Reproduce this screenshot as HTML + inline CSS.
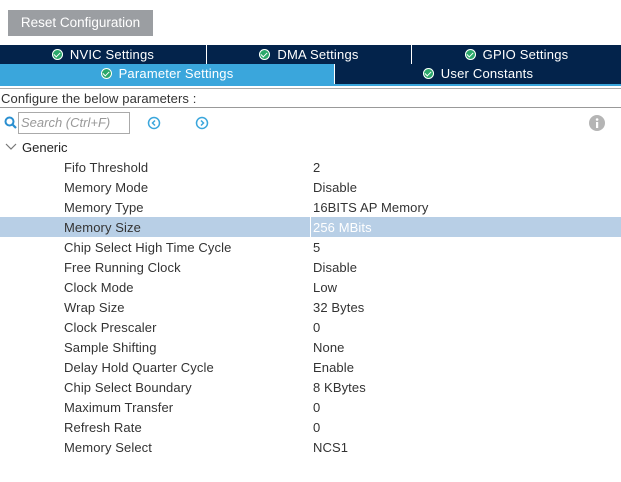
<!DOCTYPE html>
<html><head><style>
body{margin:0;width:621px;height:482px;background:#fff;font-family:"Liberation Sans",sans-serif;font-size:13px;color:#333;position:relative;overflow:hidden}
.a{position:absolute}
.btn{left:8px;top:10px;width:145px;height:26px;background:#9b9ea2;color:#fff;font-size:13.5px;line-height:26px;text-align:center}
.tab{position:absolute;height:19px;line-height:19px;color:#fff;text-align:center;font-size:13px;background:#03234b;letter-spacing:0.2px}
.ck{display:inline-block;width:11px;height:11px;border-radius:50%;background:#2aa86a;vertical-align:-1px;margin-right:7px;position:relative;box-shadow:0 0 0 1px #fff inset}
.ck:after{content:"";position:absolute;left:3px;top:2px;width:3px;height:5px;border:solid #fff;border-width:0 1.5px 1.5px 0;transform:rotate(45deg)}
.row{position:absolute;left:0;width:621px;height:20px;line-height:20px;letter-spacing:0.1px}
.row .l{position:absolute;left:64px;top:1px}.row .v{position:absolute;left:313px;top:1px}
</style></head><body>
<div class="a btn">Reset Configuration</div>
<div class="tab" style="left:0;top:45px;width:206px"><span class="ck"></span>NVIC Settings</div>
<div class="tab" style="left:207px;top:45px;width:204px"><span class="ck"></span>DMA Settings</div>
<div class="tab" style="left:412px;top:45px;width:209px"><span class="ck"></span>GPIO Settings</div>
<div class="tab" style="left:0;top:64px;width:334px;height:20px;background:#3aa6dc"><span class="ck"></span>Parameter Settings</div>
<div class="tab" style="left:335px;top:64px;width:286px;height:20px"><span class="ck"></span>User Constants</div>
<div class="a" style="left:0;top:84px;width:621px;height:2px;background:#3aa6dc"></div>
<div class="a" style="left:0;top:88px;width:621px;height:1px;background:#aaa"></div>
<div class="a" style="left:1px;top:91px;line-height:16px;letter-spacing:0.1px">Configure the below parameters :</div>
<div class="a" style="left:0;top:107px;width:621px;height:1px;background:#999"></div>
<svg class="a" style="left:4px;top:116px" width="14" height="14"><circle cx="5.5" cy="5.5" r="4" fill="none" stroke="#2a8fd0" stroke-width="2"/><line x1="8.5" y1="8.5" x2="12" y2="12" stroke="#2a8fd0" stroke-width="2.2"/></svg>
<div class="a" style="left:18px;top:112px;color:#999;font-style:italic;line-height:20px;padding-left:2px;box-sizing:border-box;width:112px;height:22px;border:1px solid #aaa">Search (Ctrl+F)</div>
<svg class="a" style="left:147px;top:116px" width="14" height="14"><circle cx="7" cy="7" r="5.5" fill="none" stroke="#3aa6dc" stroke-width="1.5"/><path d="M8 4.5L5.5 7L8 9.5" fill="none" stroke="#3aa6dc" stroke-width="1.5"/></svg>
<svg class="a" style="left:195px;top:116px" width="14" height="14"><circle cx="7" cy="7" r="5.5" fill="none" stroke="#3aa6dc" stroke-width="1.5"/><path d="M6 4.5L8.5 7L6 9.5" fill="none" stroke="#3aa6dc" stroke-width="1.5"/></svg>
<svg class="a" style="left:589px;top:115px" width="16" height="16"><circle cx="8" cy="8" r="8" fill="#b5b5b5"/><rect x="7" y="7" width="2.2" height="6" fill="#fff"/><circle cx="8.1" cy="4.5" r="1.3" fill="#fff"/></svg>
<svg class="a" style="left:5px;top:142px" width="12" height="10"><path d="M1 2L6 7L11 2" fill="none" stroke="#777" stroke-width="1.2"/></svg>
<div class="a" style="left:22px;top:139px;line-height:18px;color:#222">Generic</div>
<div class="row" style="top:157px"><span class="l">Fifo Threshold</span><span class="v">2</span></div>
<div class="row" style="top:177px"><span class="l">Memory Mode</span><span class="v">Disable</span></div>
<div class="row" style="top:197px"><span class="l">Memory Type</span><span class="v">16BITS AP Memory</span></div>
<div class="row" style="top:217px;background:#b8cfe6"><span class="l">Memory Size</span><span style="position:absolute;left:310px;top:0;width:1px;height:20px;background:#fff"></span><span class="v" style="color:#fff">256 MBits</span></div>
<div class="row" style="top:237px"><span class="l">Chip Select High Time Cycle</span><span class="v">5</span></div>
<div class="row" style="top:257px"><span class="l">Free Running Clock</span><span class="v">Disable</span></div>
<div class="row" style="top:277px"><span class="l">Clock Mode</span><span class="v">Low</span></div>
<div class="row" style="top:297px"><span class="l">Wrap Size</span><span class="v">32 Bytes</span></div>
<div class="row" style="top:317px"><span class="l">Clock Prescaler</span><span class="v">0</span></div>
<div class="row" style="top:337px"><span class="l">Sample Shifting</span><span class="v">None</span></div>
<div class="row" style="top:357px"><span class="l">Delay Hold Quarter Cycle</span><span class="v">Enable</span></div>
<div class="row" style="top:377px"><span class="l">Chip Select Boundary</span><span class="v">8 KBytes</span></div>
<div class="row" style="top:397px"><span class="l">Maximum Transfer</span><span class="v">0</span></div>
<div class="row" style="top:417px"><span class="l">Refresh Rate</span><span class="v">0</span></div>
<div class="row" style="top:437px"><span class="l">Memory Select</span><span class="v">NCS1</span></div>
</body></html>
